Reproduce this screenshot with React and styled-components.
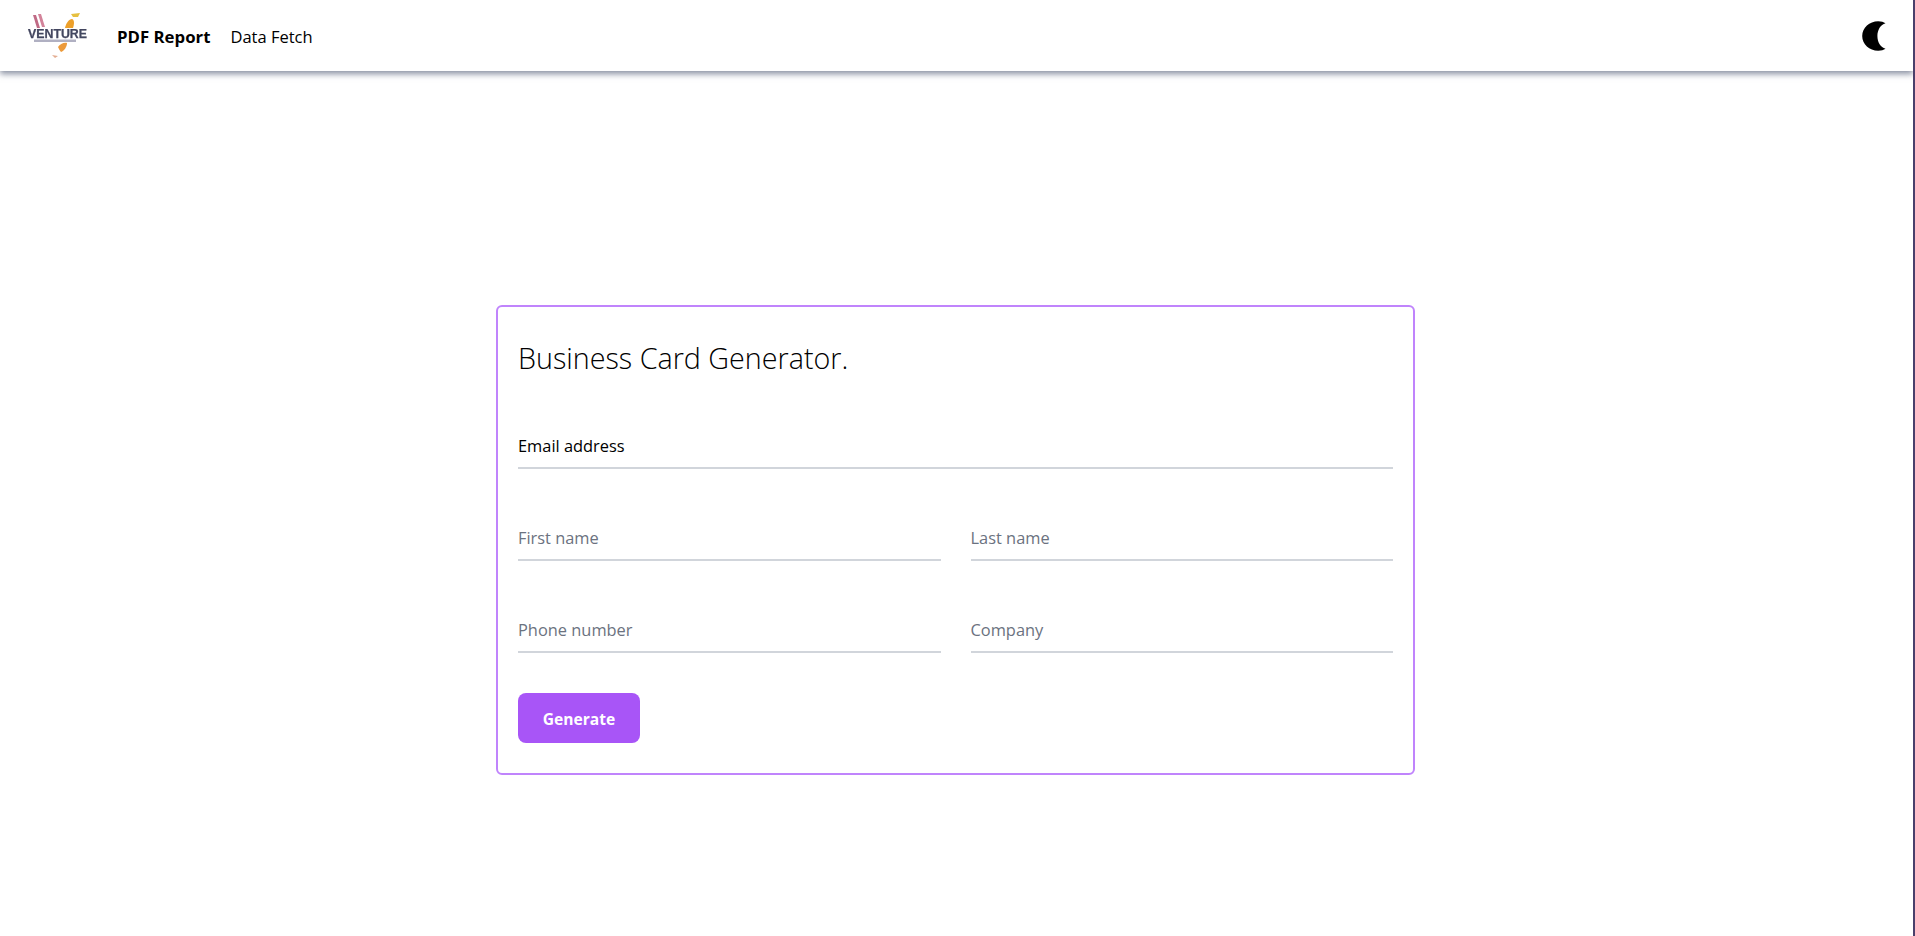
import React from 'react';
import styled, { createGlobalStyle } from 'styled-components';

const GlobalStyle = createGlobalStyle`
  html, body {
    margin: 0;
    padding: 0;
    background: #fff;
  }
  body {
    font-family: "Open Sans", "Noto Sans", "Liberation Sans", sans-serif;
    color: #000;
  }
`;

function Logo() {
  return (
    <LogoSvg viewBox="0 0 64 46" aria-hidden="true">
      <defs>
        <filter id="logoBlur" x="-10%" y="-10%" width="120%" height="120%">
          <feGaussianBlur stdDeviation="0.6" />
        </filter>
      </defs>
      <g filter="url(#logoBlur)">
        <path d="M7 2 L10 2 L14 15 L11 15 Z" fill="#c06a85" />
        <path d="M12 1 L15 1 L19 14 L16 14 Z" fill="#d3839a" />
        <path d="M39 15 C40 10 43 6 46 6 C49 7 48 12 47 15 Z" fill="#eda02c" />
        <path d="M45 1 L54 0 L52 4 L47 4 Z" fill="#e6c040" />
        <path d="M32 34 C34 31 38 29 41 30 C41 34 38 38 35 39 C34 38 33 36 32 34 Z" fill="#ec9a3a" />
        <path d="M26 42 L32 43 L29 45 Z" fill="#e3ac90" />
        <text x="2" y="24.5" fontFamily="Liberation Sans, sans-serif" fontWeight="700" fontSize="12" textLength="59" lengthAdjust="spacingAndGlyphs" fill="#43465f" stroke="#43465f" strokeWidth="0.25">VENTURE</text>
        <rect x="8" y="26.5" width="42" height="2.5" fill="#b0b0c2" />
      </g>
    </LogoSvg>
  );
}

function MoonIcon() {
  return (
    <MoonSvg viewBox="0 0 24 30" aria-hidden="true">
      <path d="M23.5 2.2 C21.6 0.9 19.4 0.2 16.2 0.2 C7.4 0.2 0.2 6.9 0.2 15 C0.2 23.1 7.4 29.8 16.2 29.8 C19.4 29.8 21.6 29.1 23.5 27.8 C18.6 26.4 15.4 21.2 15.4 15 C15.4 8.8 18.6 3.6 23.5 2.2 Z" fill="#000" />
    </MoonSvg>
  );
}

export default function App() {
  return (
    <Page>
      <GlobalStyle />
      <Header>
        <Brand>
          <Logo />
          <NavLink $active>PDF Report</NavLink>
          <NavLink>Data Fetch</NavLink>
        </Brand>
        <ThemeToggle aria-label="Toggle theme">
          <MoonIcon />
        </ThemeToggle>
      </Header>
      <Main>
        <Card>
          <Title>Business Card Generator.</Title>
          <Field>
            <Input defaultValue="Email address" />
          </Field>
          <Row>
            <Field>
              <Input placeholder="First name" />
            </Field>
            <Field>
              <Input placeholder="Last name" />
            </Field>
          </Row>
          <Row>
            <Field>
              <Input placeholder="Phone number" />
            </Field>
            <Field>
              <Input placeholder="Company" />
            </Field>
          </Row>
          <GenerateButton type="button">Generate</GenerateButton>
        </Card>
      </Main>
    </Page>
  );
}

const Page = styled.div`
  min-height: 936px;
  box-sizing: border-box;
  border-right: 2px solid #4a3f6b;
  overflow: hidden;
`;

const Header = styled.header`
  height: 71px;
  box-sizing: border-box;
  padding: 0 27px 0 26px;
  display: flex;
  align-items: center;
  justify-content: space-between;
  background: #fff;
  box-shadow: 0 3px 6px rgba(60, 72, 100, 0.6);
`;

const Brand = styled.div`
  display: flex;
  align-items: center;
`;

const LogoSvg = styled.svg`
  width: 64px;
  height: 46px;
  margin-right: 27px;
`;

const NavLink = styled.a`
  padding-top: 2px;
  font-size: ${props => (props.$active ? '16.8px' : '16.5px')};
  font-weight: ${props => (props.$active ? 700 : 400)};
  margin-right: 20px;
  color: #000;
  cursor: pointer;
`;

const ThemeToggle = styled.button`
  display: flex;
  padding: 0;
  border: 0;
  background: none;
  cursor: pointer;
`;

const MoonSvg = styled.svg`
  width: 24px;
  height: 30px;
`;

const Main = styled.main`
  display: flex;
  justify-content: center;
  padding: 234px 2px 0 0;
`;

const Card = styled.div`
  width: 919px;
  box-sizing: border-box;
  padding: 30px 20px;
  border: 2px solid #c084fc;
  border-radius: 6px;
  background: #fff;
`;

const Title = styled.h1`
  margin: 0 0 38px;
  font-size: 28.7px;
  font-weight: 300;
  line-height: 42px;
`;

const Row = styled.div`
  display: grid;
  grid-template-columns: 1fr 1fr;
  column-gap: 30px;
`;

const Field = styled.div`
  margin-bottom: 40px;
`;

const Input = styled.input`
  display: block;
  width: 100%;
  box-sizing: border-box;
  height: 52px;
  padding: 7px 0 0;
  border: 0;
  border-bottom: 2px solid #d1d5db;
  outline: none;
  background: transparent;
  font: 400 16.4px "Open Sans", "Noto Sans", sans-serif;
  color: #000;
  &::placeholder {
    color: #6b7280;
    opacity: 1;
  }
`;

const GenerateButton = styled.button`
  display: block;
  width: 122px;
  height: 50px;
  padding: 2px 0 0;
  border: 0;
  border-radius: 8px;
  background: #a855f7;
  color: #fff;
  font: 700 15.6px "Open Sans", "Noto Sans", sans-serif;
  cursor: pointer;
`;
